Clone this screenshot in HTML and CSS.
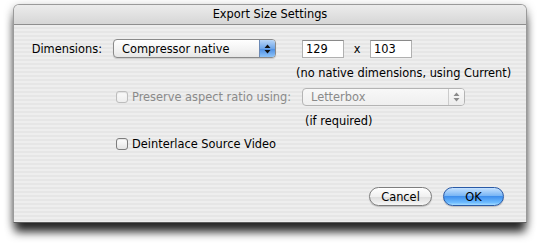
FILE: index.html
```html
<!DOCTYPE html>
<html lang="en">
<head>
  <meta charset="UTF-8">
  <title>Export Size Settings</title>
  <link rel="stylesheet" href="styles.css">
</head>
<body>
  <div class="window">
    <div class="titlebar">Export Size Settings</div>
    <div class="content">
      <div class="form-grid">
        <div class="label">Dimensions:</div>
        <div class="popup">
          <span class="popup-text">Compressor native</span>
          <span class="stepper">
            <svg width="7" height="10" viewBox="0 0 7 10"><path d="M3.5 0.5 L6.5 4 L0.5 4 Z M0.5 6 L6.5 6 L3.5 9.5 Z" fill="#111"/></svg>
          </span>
        </div>
        <div class="dims">
          <input class="field" type="text" value="129">
          <span class="times">x</span>
          <input class="field" type="text" value="103">
        </div>

        <div class="note">(no native dimensions, using Current)</div>

        <label class="check disabled">
          <span class="box"></span>
          <span>Preserve aspect ratio using:</span>
        </label>
        <div class="popup disabled">
          <span class="popup-text">Letterbox</span>
          <span class="stepper">
            <svg width="7" height="10" viewBox="0 0 7 10"><path d="M3.5 0.5 L6.5 4 L0.5 4 Z M0.5 6 L6.5 6 L3.5 9.5 Z" fill="#8c8c8c"/></svg>
          </span>
        </div>

        <div class="hint">(if required)</div>

        <label class="check">
          <span class="box"></span>
          <span>Deinterlace Source Video</span>
        </label>
      </div>

      <div class="buttons">
        <button class="btn">Cancel</button>
        <button class="btn default">OK</button>
      </div>
    </div>
  </div>
</body>
</html>
```

FILE: styles.css
```css
/* Export dialog */
:root {
  --text-color: #000;
  --disabled-color: #8a8a8a;
  --border-color: #8c8c8c;
}

html, body {
  height: 100%;
}

body {
  margin: 0;
  padding: 4px 13px 0;
  box-sizing: border-box;
  background-color: #fff;
  font-family: "DejaVu Sans", "Liberation Sans", sans-serif;
  font-size: 11.4px;
  color: var(--text-color);
}

.window {
  width: 514px;
  height: 219px;
  box-sizing: border-box;
  border: 1px solid #9a9a9a;
  border-bottom-color: #5e5e5e;
  border-radius: 6px 6px 0 0;
  background: repeating-linear-gradient(#eeeeee 0, #eeeeee 2px, #e6e6e6 2px, #e6e6e6 4px);
  box-shadow: 0 11px 10px -2px rgba(0, 0, 0, 0.8), 0 3px 10px rgba(0, 0, 0, 0.35);
  display: flex;
  flex-direction: column;
  overflow: hidden;
}

.titlebar {
  height: 19px;
  line-height: 19px;
  text-align: center;
  background: linear-gradient(#ececec, #d6d6d6);
  border-bottom: 1px solid #8e8e8e;
}

.content {
  flex: 1;
  display: flex;
  flex-direction: column;
  padding: 14px 0 0;
}

.form-grid {
  display: grid;
  grid-template-columns: 99px 189px 1fr;
  grid-template-rows: 19px 16px 18px 16px 16px;
  row-gap: 7px;
  align-items: center;
}

.label {
  text-align: right;
  padding-right: 11px;
}

.popup {
  width: 163px;
  height: 19px;
  box-sizing: border-box;
  border: 1px solid #8a8a8a;
  border-radius: 4px;
  background: linear-gradient(#ffffff, #f2f2f2 60%, #e6e6e6);
  display: flex;
  align-items: center;
  overflow: hidden;
  box-shadow: 0 1px 1px rgba(0, 0, 0, 0.15);
}

.popup-text {
  flex: 1;
  padding-left: 8px;
}

.stepper {
  width: 15px;
  height: 100%;
  border-left: 1px solid #6b89b5;
  background: linear-gradient(#b9d6f7, #6ea6ea 50%, #4a8ce2 51%, #8fc4f8);
  display: flex;
  align-items: center;
  justify-content: center;
}

.popup.disabled {
  height: 18px;
  border-color: #b4b4b4;
  color: var(--disabled-color);
  box-shadow: none;
  background: linear-gradient(#f8f8f8, #efefef);
}

.popup.disabled .stepper {
  border-left-color: #cccccc;
  background: linear-gradient(#fafafa, #ececec);
}

.dims {
  display: flex;
  align-items: center;
}

.field {
  width: 42px;
  height: 18px;
  box-sizing: border-box;
  margin: 0;
  padding: 0 0 0 3px;
  border: 1px solid #b0b0b0;
  border-top-color: #8a8a8a;
  background-color: #fff;
  font: inherit;
  color: var(--text-color);
}

.times {
  width: 26px;
  text-align: center;
}

.note {
  grid-column: 3;
  margin-left: -6px;
}

.check {
  grid-column: 2;
  display: flex;
  align-items: center;
  gap: 4px;
  padding-left: 3px;
}

.box {
  width: 12px;
  height: 12px;
  box-sizing: border-box;
  border: 1px solid #7d7d7d;
  border-radius: 3px;
  background: linear-gradient(#ffffff, #e4e4e4);
  box-shadow: inset 0 1px 1px rgba(0, 0, 0, 0.1);
}

.check.disabled {
  color: var(--disabled-color);
}

.check.disabled .box {
  border-color: #bdbdbd;
  background: linear-gradient(#fafafa, #eeeeee);
}

.hint {
  grid-column: 3;
  padding-left: 3px;
}

.buttons {
  display: flex;
  justify-content: flex-end;
  gap: 11px;
  padding: 0 22px 0 0;
  margin-top: 35px;
}

.btn {
  height: 19px;
  padding: 0;
  border: 1px solid #7e7e7e;
  border-radius: 10px;
  background: linear-gradient(#ffffff, #f0f0f0 50%, #dcdcdc 51%, #f6f6f6);
  font: inherit;
  color: var(--text-color);
  width: 63px;
  box-shadow: 0 1px 1px rgba(0, 0, 0, 0.2);
}

.btn.default {
  width: 61px;
  border-color: #2a5aa6;
  background: linear-gradient(#c6e2ff, #7ab6f5 45%, #3f8fed 50%, #6dbbff 85%, #a6dcff);
}
```
